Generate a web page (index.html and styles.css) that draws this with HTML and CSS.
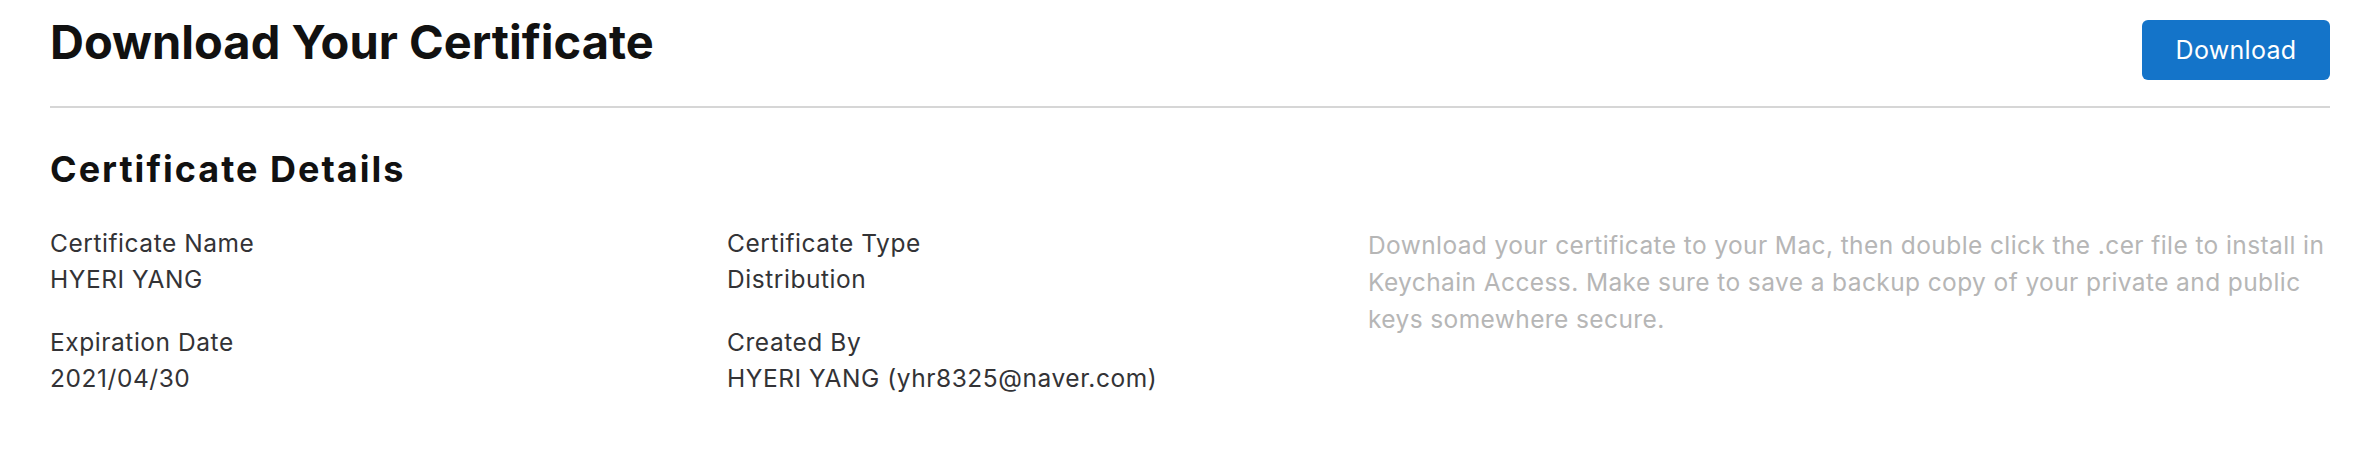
FILE: index.html
```html
<!DOCTYPE html>
<html lang="en">
<head>
<meta charset="utf-8">
<title>Download Your Certificate</title>
<link rel="stylesheet" href="styles.css">
</head>
<body>
<main class="page">
  <header class="page-header">
    <h1 class="page-title">Download Your Certificate</h1>
    <button class="btn-primary" type="button">Download</button>
  </header>
  <section class="details">
    <h2 class="section-title">Certificate Details</h2>
    <div class="details-grid">
      <div class="field-col">
        <div class="field">
          <div class="field-label">Certificate Name</div>
          <div class="field-value">HYERI YANG</div>
        </div>
        <div class="field">
          <div class="field-label">Expiration Date</div>
          <div class="field-value">2021/04/30</div>
        </div>
      </div>
      <div class="field-col">
        <div class="field">
          <div class="field-label">Certificate Type</div>
          <div class="field-value">Distribution</div>
        </div>
        <div class="field">
          <div class="field-label">Created By</div>
          <div class="field-value">HYERI YANG (yhr8325@naver.com)</div>
        </div>
      </div>
      <p class="help-text">Download your certificate to your Mac, then double click the .cer file to install in Keychain Access. Make sure to save a backup copy of your private and public keys somewhere secure.</p>
    </div>
  </section>
</main>
</body>
</html>
```
FILE: styles.css
```css
* { box-sizing: border-box; }

html, body {
  margin: 0;
  padding: 0;
  background: #ffffff;
}

body {
  font-family: "Inter", "Liberation Sans", sans-serif;
  color: #333336;
}

.page {
  padding: 0 44px 0 50px;
}

.page-header {
  display: flex;
  justify-content: space-between;
  align-items: flex-start;
  padding-top: 20px;
  height: 108px;
  border-bottom: 2px solid #d6d6d6;
}

.page-title {
  margin: -5px 0 0 0;
  font-size: 47px;
  line-height: 54px;
  font-weight: 700;
  color: #111111;
  letter-spacing: 0;
}

.btn-primary {
  width: 188px;
  height: 60px;
  border: none;
  border-radius: 6px;
  background: #1474c9;
  color: #ffffff;
  font-family: "Inter", "Liberation Sans", sans-serif;
  font-size: 25px;
  font-weight: 400;
  letter-spacing: 0.3px;
  padding: 0;
  cursor: pointer;
}

.section-title {
  margin: 38px 0 0 0;
  font-size: 36px;
  line-height: 46px;
  font-weight: 700;
  color: #111111;
  letter-spacing: 2px;
}

.details-grid {
  display: grid;
  grid-template-columns: 677px 641px 1fr;
  margin-top: 33px;
}

.field-col {
  display: flex;
  flex-direction: column;
  gap: 27px;
}

.field-label,
.field-value {
  font-size: 24.5px;
  line-height: 36px;
  letter-spacing: 0.55px;
  color: #333336;
}

.help-text {
  margin: 2px 0 0 0;
  font-size: 24.5px;
  line-height: 37px;
  letter-spacing: 0.4px;
  color: #b6b6b6;
}
```
